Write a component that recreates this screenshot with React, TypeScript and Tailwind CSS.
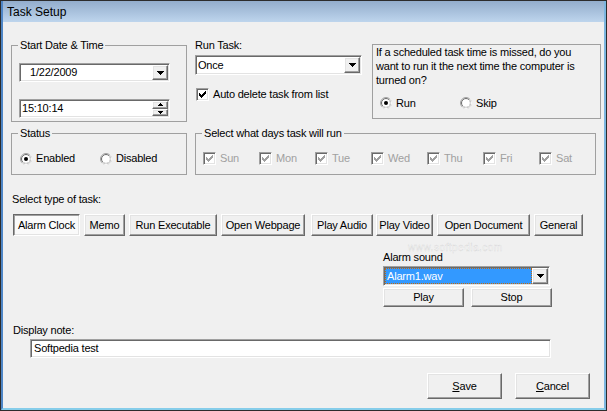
import React from "react";

const raised =
  "border border-t-white border-l-white border-r-[#696969] border-b-[#696969] shadow-[inset_-1px_-1px_0_#a0a0a0,inset_1px_1px_0_#e3e3e3] bg-[#f0f0f0]";
const pressed =
  "border border-t-[#696969] border-l-[#696969] border-r-white border-b-white shadow-[inset_1px_1px_0_#a0a0a0,inset_-1px_-1px_0_#e3e3e3] bg-[#fafafa]";
const sunken =
  "border border-t-[#a0a0a0] border-l-[#a0a0a0] border-r-white border-b-white shadow-[inset_1px_1px_0_#696969,inset_-1px_-1px_0_#e3e3e3] bg-white";

function Tri({ up = false, w = 7 }: { up?: boolean; w?: number }) {
  const rows = Math.ceil(w / 2);
  const rects = [];
  for (let i = 0; i < rows; i++) {
    const y = up ? rows - 1 - i : i;
    rects.push(<rect key={i} x={i} y={y} width={w - 2 * i} height={1} fill="#000" />);
  }
  return (
    <svg width={w} height={rows} viewBox={`0 0 ${w} ${rows}`} shapeRendering="crispEdges">
      {rects}
    </svg>
  );
}

function DropBtn() {
  return (
    <div className={`${raised} flex w-[16px] shrink-0 items-center justify-center self-stretch`}>
      <Tri />
    </div>
  );
}

function Spin() {
  return (
    <div className="flex w-[16px] shrink-0 flex-col self-stretch">
      <div className={`${raised} flex flex-1 items-center justify-center`}>
        <Tri up w={5} />
      </div>
      <div className={`${raised} flex flex-1 items-center justify-center`}>
        <Tri w={5} />
      </div>
    </div>
  );
}

const checkPixels: [number, number][] = [
  [6, 0],
  [5, 1], [6, 1],
  [0, 2], [4, 2], [5, 2], [6, 2],
  [0, 3], [1, 3], [3, 3], [4, 3], [5, 3],
  [0, 4], [1, 4], [2, 4], [3, 4], [4, 4],
  [1, 5], [2, 5], [3, 5],
  [2, 6],
];

function CheckBox({ label, disabled = false }: { label: string; disabled?: boolean }) {
  const color = disabled ? "#a0a0a0" : "#000";
  return (
    <div className="flex h-[13px] items-center gap-[4px] whitespace-nowrap">
      <div
        className={`${sunken} flex h-[13px] w-[13px] shrink-0 items-center justify-center ${
          disabled ? "bg-[#f0f0f0]" : ""
        }`}
      >
        <svg width="7" height="7" viewBox="0 0 7 7" shapeRendering="crispEdges">
          {checkPixels.map(([x, y], i) => (
            <rect key={i} x={x} y={y} width={1} height={1} fill={color} />
          ))}
        </svg>
      </div>
      <span className={disabled ? "text-[#a0a0a0]" : ""}>{label}</span>
    </div>
  );
}

function Radio({ label, checked = false }: { label: string; checked?: boolean }) {
  return (
    <div className="flex h-[13px] items-center gap-[4px] whitespace-nowrap">
      <svg width="12" height="12" viewBox="0 0 12 12" className="shrink-0">
        <circle cx="6" cy="6" r="5.5" fill="#fff" stroke="#a0a0a0" />
        <path d="M9.9 2.1 A5.5 5.5 0 0 1 2.1 9.9" fill="none" stroke="#fff" />
        <circle cx="6" cy="6" r="4.5" fill="#fff" stroke="#696969" />
        <path d="M9.2 2.8 A4.5 4.5 0 0 1 2.8 9.2" fill="none" stroke="#e3e3e3" />
        {checked && <circle cx="6" cy="6" r="2" fill="#000" />}
      </svg>
      <span>{label}</span>
    </div>
  );
}

function Btn({
  children,
  className = "",
  down = false,
}: {
  children: React.ReactNode;
  className?: string;
  down?: boolean;
}) {
  return (
    <div
      className={`${down ? pressed : raised} flex shrink-0 items-center justify-center whitespace-nowrap ${className}`}
    >
      {children}
    </div>
  );
}

const taskButtons: { label: string; cls: string; down?: boolean }[] = [
  { label: "Alarm Clock", cls: "w-[67px]", down: true },
  { label: "Memo", cls: "ml-[4px] w-[41px]" },
  { label: "Run Executable", cls: "ml-[4px] w-[88px]" },
  { label: "Open Webpage", cls: "ml-[4px] w-[84px]" },
  { label: "Play Audio", cls: "ml-[6px] w-[62px]" },
  { label: "Play Video", cls: "ml-[3px] w-[57px]" },
  { label: "Open Document", cls: "ml-[4px] w-[93px]" },
  { label: "General", cls: "ml-[4px] w-[49px]" },
];

const days = ["Sun", "Mon", "Tue", "Wed", "Thu", "Fri", "Sat"];

export default function App() {
  return (
    <div className="h-[411px] w-[607px] bg-[#2c2c2c] p-px font-['Liberation_Sans',Arial,sans-serif] text-[11px] leading-[13px] tracking-[-0.2px] text-black">
      <div className="flex h-full flex-col border-x-2 border-b-2 border-l-[#4f86c6] border-r-[#7db6e0] border-b-[#86cdea]">
        {/* title bar */}
        <div className="h-[21px] shrink-0 bg-gradient-to-b from-[#93adcc] to-[#bed5ed] pl-[4px] pt-[2px] text-[12px] leading-[19px] tracking-normal">
          Task Setup
        </div>

        {/* client */}
        <div className="relative flex-1 bg-[#f0f0f0] pl-[8px]">
          {/* Row 1 */}
          <div className="mt-[17px] flex items-start">
            <fieldset className="h-[83px] w-[176px] shrink-0 border border-[#a0a0a0]">
              <legend className="ml-[6px] px-[2px] leading-[13px]">Start Date &amp; Time</legend>
              <div className={`${sunken} ml-[7px] mt-[11px] flex h-[19px] w-[151px] p-px`}>
                <div className="flex flex-1 items-center pl-[9px]">1/22/2009</div>
                <DropBtn />
              </div>
              <div className={`${sunken} ml-[7px] mt-[17px] flex h-[19px] w-[151px] p-px`}>
                <div className="flex flex-1 items-center pl-[1px]">15:10:14</div>
                <Spin />
              </div>
            </fieldset>

            <div className="ml-[8px] w-[167px] shrink-0">
              <div className="leading-[13px]">Run Task:</div>
              <div className={`${sunken} mt-[3px] flex h-[20px] w-[167px] p-px`}>
                <div className="flex flex-1 items-center pl-[1px]">Once</div>
                <DropBtn />
              </div>
              <div className="ml-px mt-[13px]">
                <CheckBox label="Auto delete task from list" />
              </div>
            </div>

            <div className="ml-[10px] mt-[5px] h-[75px] w-[229px] shrink-0 border border-[#a0a0a0] pl-[3px] leading-[14px]">
              <div className="whitespace-nowrap">If a scheduled task time is missed, do you</div>
              <div className="whitespace-nowrap">want to run it the next time the computer is</div>
              <div className="whitespace-nowrap">turned on?</div>
              <div className="ml-[4px] mt-[9px] flex">
                <div className="w-[80px]">
                  <Radio label="Run" checked />
                </div>
                <Radio label="Skip" />
              </div>
            </div>
          </div>

          {/* Row 2 */}
          <div className="mt-[5px] flex items-start">
            <fieldset className="h-[48px] w-[176px] shrink-0 border border-[#a0a0a0]">
              <legend className="ml-[6px] px-[2px] leading-[13px]">Status</legend>
              <div className="ml-[8px] mt-[12px] flex">
                <div className="w-[80px]">
                  <Radio label="Enabled" checked />
                </div>
                <Radio label="Disabled" />
              </div>
            </fieldset>
            <fieldset className="ml-[8px] h-[48px] w-[393px] shrink-0 border border-[#a0a0a0]">
              <legend className="ml-[6px] px-[2px] leading-[13px]">Select what days task will run</legend>
              <div className="ml-[7px] mt-[12px] flex">
                {days.map((d) => (
                  <div key={d} className="w-[56px] shrink-0">
                    <CheckBox label={d} disabled />
                  </div>
                ))}
              </div>
            </fieldset>
          </div>

          <div className="ml-px mt-[18px]">Select type of task:</div>

          <div className="ml-[2px] mt-[8px] flex h-[22px]">
            {taskButtons.map((b) => (
              <Btn key={b.label} className={b.cls} down={b.down}>
                {b.label}
              </Btn>
            ))}
          </div>

          {/* Alarm sound */}
          <div className="ml-[372px] mt-[15px] w-[169px]">
            <div>Alarm sound</div>
            <div className={`${sunken} mt-[2px] flex h-[20px] w-[167px] p-px`}>
              <div className="flex flex-1 items-center border border-dotted border-[#c06a10] bg-[#3399ff] pl-[1px] text-white">
                Alarm1.wav
              </div>
              <DropBtn />
            </div>
            <div className="mt-[2px] flex">
              <Btn className="h-[19px] w-[81px]">Play</Btn>
              <Btn className="ml-[7px] h-[19px] w-[81px]">Stop</Btn>
            </div>
          </div>

          {/* Display note */}
          <div className="ml-[2px] mt-[17px]">Display note:</div>
          <div className={`${sunken} ml-[19px] mt-[2px] flex h-[19px] w-[521px] items-center pl-[3px]`}>
            Softpedia test
          </div>

          <div className="ml-[416px] mt-[15px] flex">
            <Btn className="h-[26px] w-[75px]">
              <span>
                <span className="underline underline-offset-[1px]">S</span>ave
              </span>
            </Btn>
            <Btn className="ml-[13px] h-[26px] w-[75px]">
              <span>
                <span className="underline underline-offset-[1px]">C</span>ancel
              </span>
            </Btn>
          </div>

          {/* watermark */}
          <div className="pointer-events-none absolute left-[405px] top-[219px] text-[10px] tracking-[0.5px] text-white [-webkit-text-stroke:0.4px_rgba(150,150,150,0.35)]">
            www.softpedia.com
          </div>
        </div>
      </div>
    </div>
  );
}
